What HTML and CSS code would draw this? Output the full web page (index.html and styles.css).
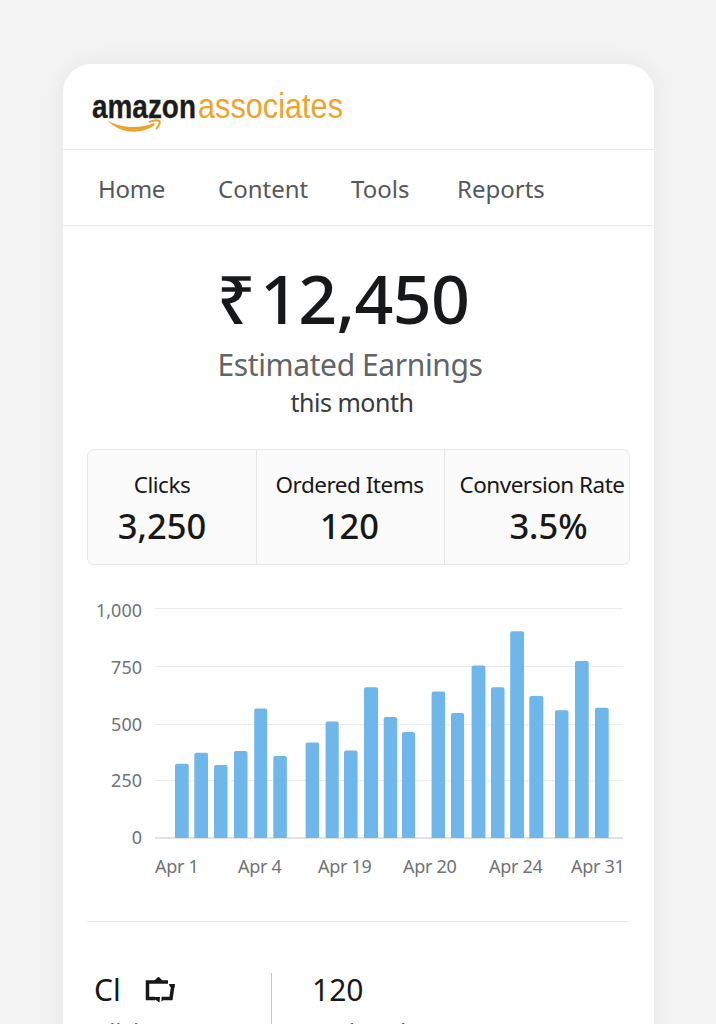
FILE: index.html
```html
<!DOCTYPE html>
<html lang="en">
<head>
  <meta charset="UTF-8" />
  <title>Amazon Associates</title>
  <link rel="stylesheet" href="styles.css">
</head>
<body>
  <div class="card">
    <header class="header">
      <svg class="logo" width="270" height="48" viewBox="0 0 270 48">
        <text class="logo-amazon" x="0" y="32" textLength="104" lengthAdjust="spacingAndGlyphs">amazon</text>
        <text class="logo-associates" x="106" y="32" textLength="145" lengthAdjust="spacingAndGlyphs">associates</text>
        <path class="logo-smile" d="M15 34C27 42 47 43.500 62 37L63 39C48 49.500 27 47.500 15 34Z" />
        <path class="logo-arrow" d="M57 36.200C60 34.200 65 33.800 67.500 35C68.300 37.500 66.500 40.500 64 43" />
      </svg>
    </header>

    <nav class="nav">
      <a class="nav-home">Home</a>
      <a class="nav-content">Content</a>
      <a class="nav-tools">Tools</a>
      <a class="nav-reports">Reports</a>
    </nav>

    <section class="earnings">
      <div class="amount"><span class="rupee">₹</span>12,450</div>
      <div class="amount-label">Estimated Earnings</div>
      <div class="amount-period">this month</div>
    </section>

    <section class="stats">
      <div class="stat stat-clicks">
        <div class="stat-label">Clicks</div>
        <div class="stat-value">3,250</div>
      </div>
      <div class="stat stat-items">
        <div class="stat-label">Ordered Items</div>
        <div class="stat-value">120</div>
      </div>
      <div class="stat stat-rate">
        <div class="stat-label">Conversion Rate</div>
        <div class="stat-value">3.5%</div>
      </div>
    </section>

    <section class="chart">
      <div class="y-axis">
        <span>1,000</span>
        <span>750</span>
        <span>500</span>
        <span>250</span>
        <span>0</span>
      </div>
      <svg class="plot" width="468" height="231" viewBox="155 608 468 231">
        <g class="grid">
          <path d="M155 608.500H623M155 666.500H623M155 724.500H623M155 780.500H623" />
          <path class="baseline" d="M155 838H623" />
        </g>
        <g class="bars">
          <path d="M175 838V765.700q0-2 2-2h9.700q2 0 2 2V838z" />
          <path d="M194.300 838V754.700q0-2 2-2h9.700q2 0 2 2V838z" />
          <path d="M214 838V767q0-2 2-2h9.500q2 0 2 2V838z" />
          <path d="M234 838V753q0-2 2-2h9.500q2 0 2 2V838z" />
          <path d="M254.200 838V710.500q0-2 2-2h9q2 0 2 2V838z" />
          <path d="M273.300 838V758q0-2 2-2h9.600q2 0 2 2V838z" />
          <path d="M305.600 838V744.500q0-2 2-2h9.500q2 0 2 2V838z" />
          <path d="M325.600 838V723.500q0-2 2-2h9.100q2 0 2 2V838z" />
          <path d="M344 838V752.500q0-2 2-2h9.600q2 0 2 2V838z" />
          <path d="M364 838V689.300q0-2 2-2h10q2 0 2 2V838z" />
          <path d="M383.700 838V719q0-2 2-2h9.500q2 0 2 2V838z" />
          <path d="M402 838V734q0-2 2-2h9q2 0 2 2V838z" />
          <path d="M431.600 838V693.500q0-2 2-2h9.500q2 0 2 2V838z" />
          <path d="M451 838V715q0-2 2-2h9.100q2 0 2 2V838z" />
          <path d="M471.600 838V667.500q0-2 2-2h9.800q2 0 2 2V838z" />
          <path d="M491 838V689.300q0-2 2-2h9.500q2 0 2 2V838z" />
          <path d="M510.200 838V633.200q0-2 2-2h9.800q2 0 2 2V838z" />
          <path d="M529.300 838V698q0-2 2-2h10q2 0 2 2V838z" />
          <path d="M555 838V712.300q0-2 2-2h9.500q2 0 2 2V838z" />
          <path d="M575 838V663q0-2 2-2h9.700q2 0 2 2V838z" />
          <path d="M595 838V709.700q0-2 2-2h9.700q2 0 2 2V838z" />
        </g>
      </svg>
      <div class="x-axis">
        <span>Apr 1</span>
        <span>Apr 4</span>
        <span>Apr 19</span>
        <span>Apr 20</span>
        <span>Apr 24</span>
        <span>Apr 31</span>
      </div>
    </section>

    <section class="summary">
      <div class="summary-col">
        <div class="summary-value">
          <span>Cl</span>
          <svg class="summary-icon" width="32" height="28" viewBox="0 0 32 28">
            <path class="stroke" d="M10 22.500H2.500V6H23M28 8.500L26 22.500H17" />
            <path d="M7.500 6L10.500 3.500L12.500 1.500Q13.500 0.700 14.500 1.500L17 4L19 7H7.500ZM8.500 21H15L14.500 26.500L10 23.500H8.500ZM16.500 21H18V24L16.500 26ZM24 8L30 8L29.500 11.500L25 11Z" />
          </svg>
        </div>
        <div class="summary-label">Clicks</div>
      </div>
      <div class="summary-col summary-items">
        <div class="summary-value"><span>120</span></div>
        <div class="summary-label">Ordered</div>
      </div>
    </section>
  </div>
</body>
</html>
```
FILE: styles.css
```css
* {
  box-sizing: border-box;
}
body {
  margin: 0;
  height: 1024px;
  padding: 64px 62px 0 63px;
  overflow: hidden;
  background-color: #f3f3f3;
  font-family: "Noto Sans", sans-serif;
  color: #17181a;
}
.card {
  height: 1000px;
  background: #fff;
  border-radius: 28px 28px 0 0;
  box-shadow: 0 0 24px rgba(0, 0, 0, 0.06);
}
.header {
  height: 86px;
  padding: 22px 0 0 29px;
  border-bottom: 1px solid #ebebeb;
}
.logo {
  display: block;
}
.logo-amazon {
  font: bold 34px "Liberation Sans", sans-serif;
  fill: #1c1c1c;
  stroke: #1c1c1c;
  stroke-width: 0.3;
}
.logo-associates {
  font: 34.5px "Liberation Sans", sans-serif;
  fill: #eda42c;
}
.logo-smile {
  fill: #eda42c;
}
.logo-arrow {
  fill: none;
  stroke: #eda42c;
  stroke-width: 2;
}

.nav {
  display: grid;
  grid-template-columns: 120px 133px 106px auto;
  height: 76px;
  padding: 2px 0 0 35px;
  align-items: center;
  border-bottom: 1px solid #ebebeb;
  font-size: 24px;
  color: #55585a;
}
.nav-home {
  letter-spacing: -0.3px;
}

.earnings {
  display: flex;
  flex-direction: column;
  align-items: center;
  height: 223px;
  padding-top: 26px;
}
.amount {
  height: 94px;
  margin-right: 31px;
  font-size: 68px;
  font-weight: 500;
  line-height: 92px;
  letter-spacing: -0.6px;
}
.rupee {
  margin-right: 5px;
}
.amount-label {
  margin-right: 17px;
  font-size: 30px;
  line-height: 38px;
  letter-spacing: -0.4px;
  color: #626466;
}
.amount-period {
  margin-right: 13px;
  font-size: 25px;
  line-height: 37px;
  letter-spacing: -0.5px;
  color: #38393c;
}

.stats {
  display: grid;
  grid-template-columns: 168px 188px 1fr;
  height: 116px;
  margin: 0 24px;
  border: 1px solid #e9e9e9;
  border-radius: 7px;
  background: #fbfbfb;
  text-align: center;
  white-space: nowrap;
}
.stat {
  padding-top: 19px;
}
.stat + .stat {
  border-left: 1px solid #e6e6e6;
}
.stat-clicks {
  padding-right: 20px;
}
.stat-items {
  padding-right: 2px;
}
.stat-rate .stat-label {
  margin-right: 4px;
}
.stat-rate {
  padding-left: 14px;
}
.stat-rate .stat-value {
  margin-left: 9px;
}
.stat-label {
  font-size: 22.5px;
  line-height: 32px;
  letter-spacing: -0.5px;
}
.stat-value {
  font-size: 34.5px;
  font-weight: 500;
  line-height: 50px;
}

.chart {
  display: grid;
  grid-template-columns: 79px 468px;
  grid-template-rows: 231px 54px;
  column-gap: 13px;
  margin-top: 43px;
  font-size: 18px;
  color: #707276;
}
.y-axis {
  display: flex;
  flex-direction: column;
  justify-content: space-between;
  margin: -10px 0;
  text-align: right;
  line-height: 24px;
}
.plot {
  display: block;
}
.grid path {
  fill: none;
  stroke: #ebebed;
}
.grid .baseline {
  stroke: #d8d8da;
  stroke-width: 1.5;
}
.bars {
  fill: #6fb7eb;
}
.x-axis {
  grid-column: 2;
  display: grid;
  grid-template-columns: 83px 80px 85px 86px 82px auto;
  padding-top: 14px;
  line-height: 26px;
  letter-spacing: -0.3px;
  white-space: nowrap;
}

.summary {
  display: grid;
  grid-template-columns: 184px 1fr;
  height: 150px;
  margin: 28px 24px 0;
  padding-top: 51px;
  border-top: 1px solid #e9e9e9;
}
.summary-col {
  padding-left: 7px;
}
.summary-items {
  padding-left: 40px;
  border-left: 1px solid #c8c8c8;
}
.summary-value {
  display: flex;
  gap: 24px;
  height: 36px;
  font-size: 30px;
  line-height: 34px;
}
.summary-icon {
  margin-top: 3px;
}
.summary-icon path {
  fill: #17181a;
}
.summary-icon .stroke {
  fill: none;
  stroke: #17181a;
  stroke-width: 3.500;
}
.summary-label {
  margin-top: 5px;
  font-size: 24px;
  line-height: 36px;
  color: #626466;
}
```
